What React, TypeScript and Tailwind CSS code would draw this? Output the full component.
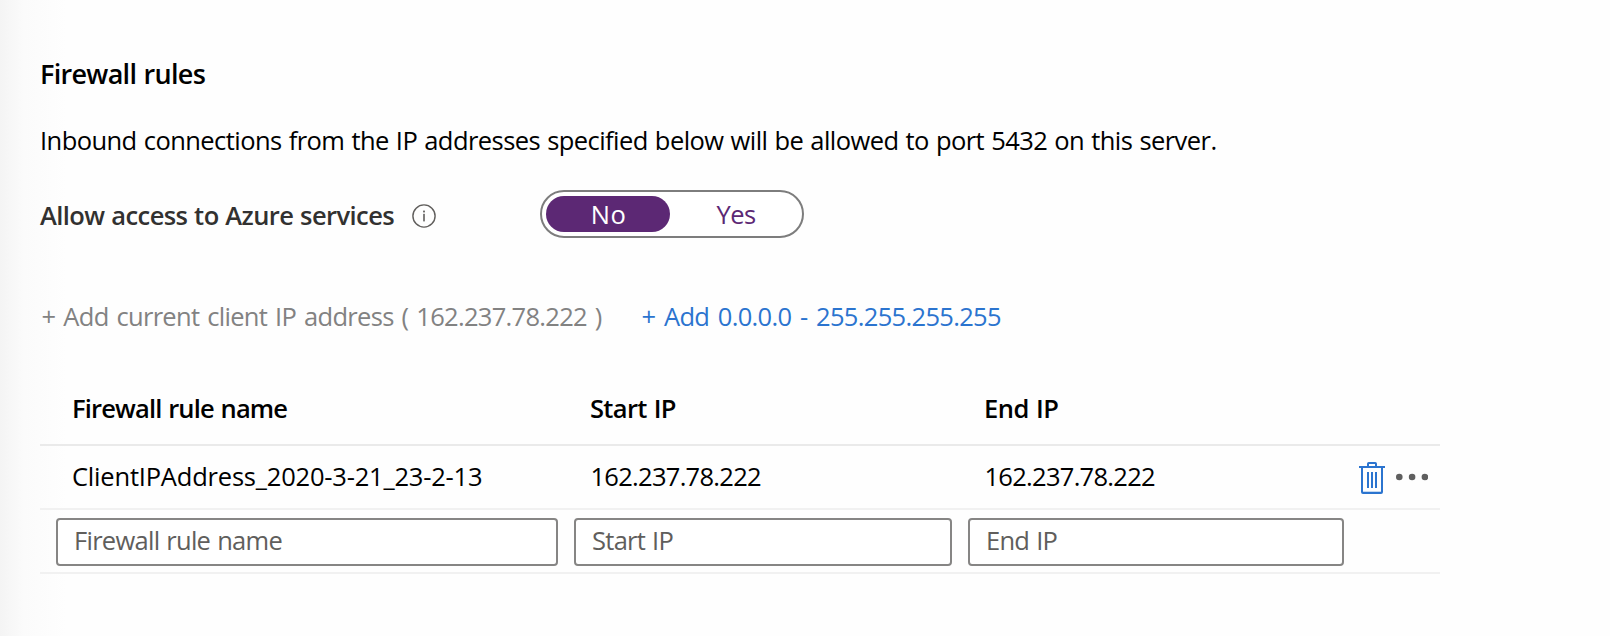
function InfoIcon() {
  return (
    <svg className="h-6 w-6 shrink-0" viewBox="0 0 24 24" fill="none">
      <circle cx="12" cy="12" r="11.1" stroke="#605e5c" strokeWidth="1.4" />
      <rect x="11.1" y="6.6" width="1.8" height="1.8" fill="#605e5c" />
      <rect x="11.2" y="9.8" width="1.6" height="7.6" fill="#605e5c" />
    </svg>
  );
}

function TrashIcon() {
  return (
    <svg className="h-8 w-[26px] shrink-0" viewBox="0 0 26 32" fill="none" stroke="#2b74cf" strokeWidth="2">
      <path d="M9 5V1.8Q9 1 9.8 1H16.2Q17 1 17 1.8V5" />
      <path d="M0 5H26" />
      <path d="M3 5V30Q3 31 4 31H22Q23 31 23 30V5" />
      <path d="M9 10V26M13 10V26M17 10V26" />
      <path d="M4 29.5H22" stroke="#c3d8f1" strokeWidth="1" />
    </svg>
  );
}

function MoreIcon() {
  return (
    <svg className="h-2 w-8 shrink-0" viewBox="0 0 32 8" fill="#5f5f5f">
      <circle cx="3.3" cy="4" r="3.3" />
      <circle cx="16.1" cy="4" r="3.3" />
      <circle cx="28.9" cy="4" r="3.3" />
    </svg>
  );
}

const inputClass =
  "h-12 w-full rounded-[4px] border-2 border-[#868584] bg-white pb-1 pl-4 leading-9 tracking-[-0.72px] [word-spacing:1px] text-black outline-none placeholder:text-[#605e5c] placeholder:opacity-100";

const rowClass = "grid grid-cols-[502px_378px_376px_1fr] items-center gap-x-4 border-b-2 pl-4";

export default function App() {
  return (
    <div className="h-[636px] w-[1610px] overflow-hidden bg-[#fefefe] bg-linear-to-r from-[#f4f4f4] via-[#fbfbfb] via-[24px] to-[#fefefe] to-[66px] pl-10 pt-14 font-['Open_Sans',sans-serif] text-[25.5px] leading-9 whitespace-nowrap text-black">
      <h1 className="text-[27px] leading-9 font-semibold tracking-[-0.7px] [word-spacing:1px]">Firewall rules</h1>
      <p className="mt-[30px] tracking-[-0.56px] [word-spacing:1px]">
        Inbound connections from the IP addresses specified below will be allowed to port 5432 on this server.
      </p>

      <div className="mt-8 flex h-12 items-center">
        <div className="mt-0.5 flex w-[500px] items-center text-[#323130]">
          <span className="font-semibold tracking-[-0.57px] [word-spacing:0.6px]">Allow access to Azure services</span>
          <span className="mt-0.5 ml-[18px] flex">
            <InfoIcon />
          </span>
        </div>
        <div className="flex h-12 w-[264px] rounded-[24px] border-2 border-[#7d7d7d] bg-white p-1 text-center">
          <button className="h-9 w-[124px] rounded-[18px] bg-[#5c2874] pl-px tracking-[0.4px] text-white">No</button>
          <button className="h-9 flex-1 pr-px pl-[5px] tracking-[-0.6px] text-[#5c2874]">Yes</button>
        </div>
      </div>

      <div className="mt-[60px] flex pl-[1.5px]">
        <span className="w-[600px] tracking-[-0.7px] [word-spacing:2px] text-[#828282]">
          + Add current client IP address ( 162.237.78.222 )
        </span>
        <a className="tracking-[-0.68px] [word-spacing:2.6px] text-[#2b74cf]">+ Add 0.0.0.0 - 255.255.255.255</a>
      </div>

      <div className="mt-14 w-[1400px]">
        <div className={`${rowClass} h-14 border-[#eaeaea] pb-[18px] font-semibold`}>
          <span className="pl-4 tracking-[-0.85px] [word-spacing:1px]">Firewall rule name</span>
          <span className="pl-4 tracking-[-0.65px] [word-spacing:1px]">Start IP</span>
          <span className="pl-4 tracking-[-0.5px] [word-spacing:1px]">End IP</span>
        </div>
        <div className={`${rowClass} h-16 border-[#f1f1f1]`}>
          <span className="mb-0.5 pl-4 tracking-[-0.2px]">ClientIPAddress_2020-3-21_23-2-13</span>
          <span className="mb-0.5 pl-[16.5px] tracking-[-0.72px]">162.237.78.222</span>
          <span className="mb-0.5 pl-[16.5px] tracking-[-0.72px]">162.237.78.222</span>
          <div className="-ml-px flex items-center gap-[10.7px]">
            <span className="mt-0.5 flex">
              <TrashIcon />
            </span>
            <MoreIcon />
          </div>
        </div>
        <div className={`${rowClass} h-16 border-[#f1f1f1] pt-0.5`}>
          <input className={inputClass} placeholder="Firewall rule name" />
          <input className={inputClass} placeholder="Start IP" />
          <input className={inputClass} placeholder="End IP" />
        </div>
      </div>
    </div>
  );
}
